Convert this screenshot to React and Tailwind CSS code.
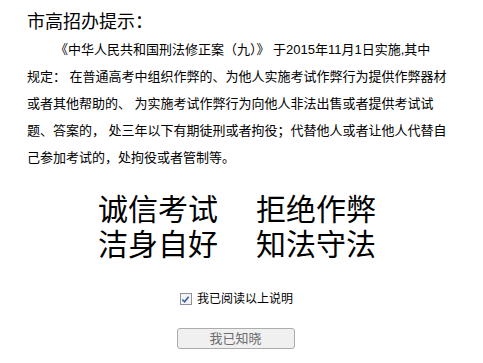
import React from 'react'

const lines = [
  '《中华人民共和国刑法修正案（九）》 于2015年11月1日实施,其中',
  '规定： 在普通高考中组织作弊的、为他人实施考试作弊行为提供作弊器材',
  '或者其他帮助的、 为实施考试作弊行为向他人非法出售或者提供考试试',
  '题、答案的， 处三年以下有期徒刑或者拘役；代替他人或者让他人代替自',
  '己参加考试的，处拘役或者管制等。',
]

const Notice = () => {
  return (
    <div className="w-[483px] h-[363px] bg-white pl-[27px] pt-[10px] text-black font-['Liberation_Sans','Noto_Sans_CJK_SC',sans-serif]">
      <h1 className="text-[18px] leading-[24px]">市高招办提示：</h1>
      <p className="mt-[2px] w-[440px] text-[13px] leading-[27px] whitespace-nowrap">
        {lines.map((line, i) => (
          <span key={i} className={i === 0 ? 'block pl-[28px]' : 'block'}>
            {line}
          </span>
        ))}
      </p>

      <div className="mt-[21px] -ml-[27px] flex flex-col items-center text-[30px] leading-[35px]">
        <div className="flex gap-[38px] pr-[9px]">
          <span>诚信考试</span>
          <span>拒绝作弊</span>
        </div>
        <div className="flex gap-[38px] pr-[9px]">
          <span>洁身自好</span>
          <span>知法守法</span>
        </div>
      </div>

      <div className="-ml-[27px] mt-[29px] flex flex-col items-center">
        <label className="flex items-center gap-[5px] text-[12px] leading-[16px] ml-[-10px]">
          <span className="w-[12px] h-[12px] border border-[#8f8f9d] bg-[#f4f4f4] flex items-center justify-center">
            <svg viewBox="0 0 10 10" className="w-[9px] h-[9px]">
              <path d="M1.5 5 L4 7.5 L8.5 2" fill="none" stroke="#3a5fa8" strokeWidth="1.8" />
            </svg>
          </span>
          我已阅读以上说明
        </label>
        <button className="mt-[21px] w-[118px] h-[21px] rounded-[3px] border border-[#acacac] bg-[#f0f0f0] text-[13px] text-[#6d6d6d] leading-none ml-[-12px]">
          我已知晓
        </button>
      </div>
    </div>
  )
}

export default function App() {
  return <Notice />
}
